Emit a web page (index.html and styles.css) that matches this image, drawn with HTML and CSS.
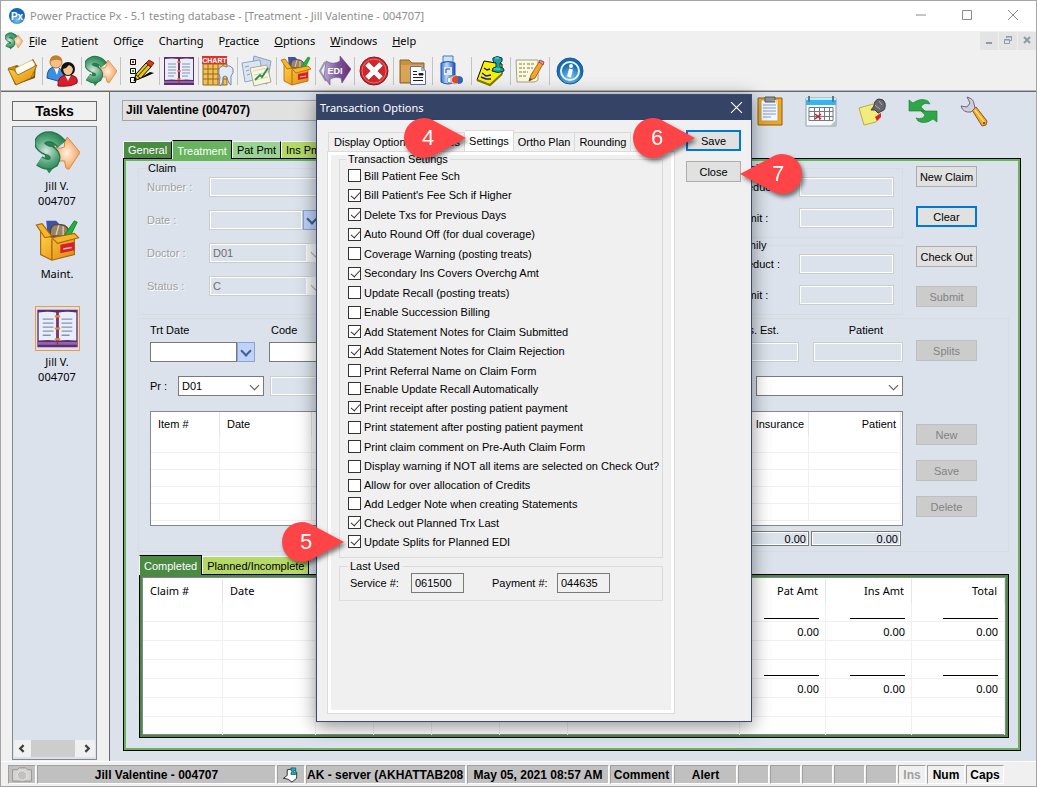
FILE: index.html
```
<!DOCTYPE html>
<html lang="en">
<head>
    <meta charset="UTF-8">
    <meta name="viewport" content="width=device-width, initial-scale=1.0">
    <title>Power Practice Px</title>
    <link rel="stylesheet" href="styles.css">
</head>
<body>

<!-- shared icons -->
<svg class="sprite" aria-hidden="true">
    <defs>
        <radialGradient id="g-green" gradientUnits="userSpaceOnUse" cx="8" cy="15" r="14"><stop offset="0" stop-color="#d4e8dd"/><stop offset=".6" stop-color="#5aa880"/><stop offset="1" stop-color="#2b8550"/></radialGradient>
        <radialGradient id="g-orange"><stop offset="0" stop-color="#fff0e0"/><stop offset="1" stop-color="#f2a35c"/></radialGradient>
        <linearGradient id="g-gold" x2="1" y2="1"><stop offset="0" stop-color="#ffd34a"/><stop offset="1" stop-color="#e08a10"/></linearGradient>
        <linearGradient id="g-purple"><stop offset="0" stop-color="#b9a8d0"/><stop offset=".5" stop-color="#7b5aa0"/><stop offset="1" stop-color="#6a2a6e"/></linearGradient>
        <linearGradient id="g-blue" x2="1"><stop offset="0" stop-color="#3a78d8"/><stop offset=".4" stop-color="#b9d6ff"/><stop offset="1" stop-color="#2050b8"/></linearGradient>
        <radialGradient id="g-info" cx=".5" cy=".75"><stop offset="0" stop-color="#7cc8f2"/><stop offset="1" stop-color="#1468b4"/></radialGradient>
    </defs>
    <symbol id="i-money" viewBox="0 0 32 32">
        <path d="M13 12l5 1 3-1V8l2-3 9 11-8 12-2-1-1-5h-8z" fill="url(#g-orange)" stroke="#d9853c" stroke-width=".7"/>
        <path d="M7 2l5-1 2 4v21l-4 5-3-5z" fill="#2b8550"/>
        <path d="M19 10Q14 4 8 5Q2 7 4 11Q6 14 11 15Q16 18 13 23Q9 26 3 22" fill="none" stroke="#27774a" stroke-width="8"/>
        <path d="M19 10Q14 4 8 5Q2 7 4 11Q6 14 11 15Q16 18 13 23Q9 26 3 22" fill="none" stroke="url(#g-green)" stroke-width="6"/>
    </symbol>
    <symbol id="i-box" viewBox="0 0 32 32">
        <path d="M8 2h7l3 3v8H9z" fill="#3c55a8"/>
        <path d="M11 13c-1-8 3-9 6-8 5-1 8 3 7 8z" fill="#9a8468" stroke="#594838"/>
        <path d="M15 12l2-7M20 12V6" stroke="#dccdb0"/>
        <path d="M21 12l7-10 2 1-5 10z" fill="#1eb43c" stroke="#0c7a22" stroke-width=".6"/>
        <path d="M4 9l8 5 16-2v14l-16 4-8-4z" fill="url(#g-gold)" stroke="#a86408" stroke-width=".8"/>
        <path d="M1 5l4-1 7 9-5 1zM12 14l16-3 3 3-15 4z" fill="#f7b62a" stroke="#a86408" stroke-width=".8"/>
        <path d="M12 15v15" stroke="#b06c0a"/>
        <path d="M18 19l10-2v6l-10 2z" fill="#d8202c"/><path d="M20 22l6-1" stroke="#ffc0b0"/>
    </symbol>
    <symbol id="i-book" viewBox="0 0 32 32">
        <path d="M1 2h30v28H1z" fill="#5a3170"/><path d="M1 26h30v2H1z" fill="#9c5fa8"/>
        <path d="M2 4q7-1 13 0v21q-6-1-13 0zM30 4q-7-1-13 0v21q6-1 13 0z" fill="#e9eefa"/>
        <path d="M5 9h8M5 12h8M5 15h8M5 18h8M5 21h6M19 9h8M19 12h8M19 15h8M19 18h8M19 21h6" stroke="#8693ad"/>
        <path d="M16 4v24" stroke="#8a2f6a"/><path d="M14 7h4M14 16h4M14 24h4" stroke="#f08c28" stroke-width="1.6"/>
    </symbol>
</svg>

<div class="window">
    <header class="title-bar">
        <svg class="logo" viewBox="0 0 16 16"><circle cx="8" cy="8" r="8" fill="url(#g-info)"/><text x="8" y="12" text-anchor="middle">Px</text></svg>
        <span class="title">Power Practice Px - 5.1 testing database - [Treatment - Jill Valentine - 004707]</span>
        <div class="window-controls">
            <button aria-label="Minimize"><svg viewBox="0 0 12 12"><path d="M1 6h10"/></svg></button>
            <button aria-label="Maximize"><svg viewBox="0 0 12 12"><path d="M1.500 1.500h9v9h-9z"/></svg></button>
            <button aria-label="Close window"><svg viewBox="0 0 12 12"><path d="M1 1l10 10M11 1L1 11"/></svg></button>
        </div>
    </header>

    <nav class="menu-bar">
        <svg class="menu-icon"><use href="#i-money"/></svg>
        <button><u>F</u>ile</button>
        <button><u>P</u>atient</button>
        <button>Offi<u>c</u>e</button>
        <button>Charting</button>
        <button>P<u>r</u>actice</button>
        <button><u>O</u>ptions</button>
        <button><u>W</u>indows</button>
        <button><u>H</u>elp</button>
        <div class="mdi-controls">
            <button aria-label="Minimize form"><svg viewBox="0 0 10 10"><path d="M2 8h6"/></svg></button>
            <button aria-label="Restore form"><svg viewBox="0 0 10 10"><path class="thin" d="M3.500 3V1.500h5v4H7M1.500 4.500h5v4h-5z"/><path class="thin" d="M3 2h6M1 5h6"/></svg></button>
            <button aria-label="Close form"><svg viewBox="0 0 10 10"><path d="M2 2l6 6M8 2L2 8"/></svg></button>
        </div>
    </nav>

    <div class="toolbar">
        <button aria-label="Open"><svg viewBox="0 0 32 32"><path d="M1 13l9-3 4 2 12-8 3 5-1 14-20 7z" fill="#8a5a08"/><path d="M7 14L25 5l3 4-2 12-15 6z" fill="#fffdf2" stroke="#c9b47a" stroke-width=".7"/><path d="M1 13l7-2 3 16-3 2z" fill="#c98a14"/><path d="M1 14l6 1 4 5 19-10-6 13-15 7z" fill="url(#g-gold)" stroke="#8a5a08" stroke-width=".8"/></svg></button>
        <button aria-label="Patients"><svg viewBox="0 0 32 32"><path d="M1 23q0-11 8-11t9 11l-6 3z" fill="#3b8ee0" stroke="#17559c"/><path d="M8 13l3 7 2-7z" fill="#fff"/><circle cx="10" cy="7" r="6" fill="#f3c08a" stroke="#b87830"/><path d="M4 7q0-7 6-6.500T16 6q-6-2-7-1-3 0-5 2z" fill="#c47f28"/><path d="M12 31q-1-11 10-11t9 8q-6 4-19 3z" fill="#d8202c" stroke="#8c0f18"/><path d="M19 20l3 6 3-6z" fill="#fff"/><circle cx="22" cy="14" r="7" fill="#111"/><path d="M17 14q4-1 6-4 3 1 4 4-1 6-5 6t-5-6z" fill="#f6c490"/></svg></button>
        <button aria-label="Treatment"><svg><use href="#i-money"/></svg></button>
        <button aria-label="Checklist"><svg viewBox="0 0 32 32"><path d="M6.500 4.500h5v5h-5zM6.500 13.500h5v5h-5zM6.500 22.500h5v5h-5z" fill="#fff" stroke="#000"/><path d="M8 6h2v2H8z" fill="red"/><path d="M8 15h2v2H8z" fill="#0b0"/><path d="M13 25l13-8 4 1-9 4z" fill="#000"/><path d="M10 26l2-7L22 8l5 4-10 11z" fill="#e5c51c" stroke="#000"/><path d="M12 20l4 3M14 21l10-11" stroke="#000" stroke-width=".8"/><path d="M22 8l3-3 5 3-3 4z" fill="#c8402c" stroke="#7a1c10"/><path d="M10 26l1-4 2 2z" fill="#000"/></svg></button>
        <button aria-label="Appointment book"><svg><use href="#i-book"/></svg></button>
        <button aria-label="Chart"><svg viewBox="0 0 32 32"><path d="M1 9h24v21H1z" fill="#f7c04c" stroke="#8a6a30"/><path d="M6 9v21M11 9v21M16 9v21M21 9v21M1 14h24M1 19h24M1 24h24" stroke="#8a6a30"/><path d="M0 1h25v8H0z" fill="#e03028"/><text x="12.500" y="8" text-anchor="middle" class="chart-word">CHART</text><path d="M17 14q3-5 7-2 4-3 7 2 1 4-2 7v9q-2 0-4-8-2-2-4 0 0 7-3 9-1-4 0-9-2-4-1-8z" fill="#e3e9f6" stroke="#7886a5"/></svg></button>
        <button aria-label="Reports"><svg viewBox="0 0 32 32"><path d="M13 1l17 5-4 23-17-4z" fill="#c5d4e8" stroke="#8ba0bd"/><path d="M1 8l18-3 3 18-18 4z" fill="#dce6f3" stroke="#92a5bf"/><path d="M9 13l17-3 4 17-17 4z" fill="#f8f6e2" stroke="#a9a98f"/><path d="M12 16l14-3M13 20l14-3M14 25l13-3" stroke="#d4d7bb"/><path d="M14 25l5-5 2 2 6-9" fill="none" stroke="#348c46" stroke-width="1.800"/><path d="M4 12l4-1M5 16l3-1M6 20l3-1" stroke="#8ba0bd"/></svg></button>
        <button aria-label="Maintenance"><svg><use href="#i-box"/></svg></button>
        <button aria-label="EDI"><svg viewBox="0 0 32 32"><path d="M6 7L1 16l6 10" fill="none" stroke="#9a9ab0" stroke-width="2"/><path d="M9 7q6 3 12-1V1l11 13-9 14-1-5q-6-2-11 1v6L5 22l1-8 1-8z" fill="url(#g-purple)" stroke="#6a4a80" stroke-width=".6"/><text x="16" y="19" text-anchor="middle" class="edi-word">EDI</text></svg></button>
        <button aria-label="Cancel"><svg viewBox="0 0 32 32"><circle cx="16" cy="16" r="14" fill="#d3262c" stroke="#7d1c20"/><circle cx="16" cy="16" r="12" fill="none" stroke="#ed6b69"/><path d="M9 9l14 14M23 9L9 23" stroke="#8c2b2b" stroke-width="6"/><path d="M9 9l14 14M23 9L9 23" stroke="#fff" stroke-width="5"/></svg></button>
        <button aria-label="Documents"><svg viewBox="0 0 32 32"><path d="M3 5h9l3 3h12v20H3z" fill="#c99242" stroke="#8c6224"/><path d="M4 10h22v17H4z" fill="#d9a657"/><path d="M13.500 11.500h11l4 4v14h-15z" fill="#fff" stroke="#5a6fae"/><path d="M24 11v5h5z" fill="#9bafdc"/><path d="M16 16.500h4M16 19.500h4M16 22.500h10M16 25.500h10M22 18.500h4v1.500h-4z" stroke="#222"/></svg></button>
        <button aria-label="Prescriptions"><svg viewBox="0 0 32 32"><path d="M7 1h10v6H7z" fill="#cfe4fb" stroke="#3d78c9"/><path d="M5 8q7-3 14 0v19q-7 4-14 0z" fill="url(#g-blue)" stroke="#1f55b0"/><path d="M8 12h8v8H8z" fill="#dceaff"/><path d="M10 18v-4h4" fill="none" stroke="#3c4a78"/><ellipse cx="15" cy="25" rx="4" ry="3" fill="#fff" stroke="#999"/><path d="M15 22q5-3 7 0v6q-5 2-7-1z" fill="#e8e8f0" stroke="#aaa"/><path d="M16 25q0-4 4-4h2l1 7h-4q-3 0-3-3z" fill="#e24a20"/><path d="M22 21q5 0 5 4t-5 4z" fill="#2a66c8"/></svg></button>
        <button aria-label="Notes"><svg viewBox="0 0 32 32"><path d="M9 6l18 3v10L15 30 2 25z" fill="#f8f000" stroke="#000"/><path d="M2 25l13 5 12-11" fill="none" stroke="#807800" stroke-width="2"/><path d="M9 13l3 2 3-1M7 18l4 3 5-1M6 22l5 2 5 0" stroke="#1818c0" stroke-width="1.500" fill="none"/><path d="M17 16q0-4 4-4V8q-4-1-3-5 4-3 9 0 1 4-2 5v4q5 1 4 4-6 3-12 0z" fill="#1aa0a0" stroke="#023c3c"/><path d="M20 3h4M19 14h6" stroke="#7ce0e0"/></svg></button>
        <button aria-label="Edit notes"><svg viewBox="0 0 32 32"><path d="M2 5h22v20q-2 2-4 2H3z" fill="#fbf8dc" stroke="#a0a08c"/><path d="M5 9h6M13 9h8M5 13h6M13 13h6M5 17h9M5 21h8" stroke="#777b60" stroke-dasharray="3 1"/><path d="M15 26l2-6L25 7l4 2-8 14z" fill="#f6a42c" stroke="#a8681a"/><path d="M25 7l1-2 4 2-1 3z" fill="#f08a90" stroke="#985058"/><path d="M15 26l1-3 2 1z" fill="#444"/></svg></button>
        <button aria-label="Information"><svg viewBox="0 0 32 32"><circle cx="16" cy="16" r="13" fill="url(#g-info)" stroke="#175b96"/><circle cx="16" cy="16" r="9" fill="none" stroke="#e8f6ff" stroke-width="2"/><circle cx="17" cy="11" r="2" fill="#fff"/><path d="M17 14l-2 8" stroke="#fff" stroke-width="4"/></svg></button>
    </div>

    <div class="main">
        <aside class="sidebar">
            <button class="tasks-button">Tasks</button>
            <div class="task-list">
                <div class="tasks">
                    <a href="#treatment"><svg><use href="#i-money"/></svg>Jill V.<br>004707</a>
                    <a href="#maint"><svg><use href="#i-box"/></svg>Maint.</a>
                    <a href="#book"><svg class="current"><use href="#i-book"/></svg>Jill V.<br>004707</a>
                </div>
                <div class="scrollbar">
                    <button aria-label="Scroll left"><svg viewBox="0 0 8 8"><path d="M5 1L2 4l3 3"/></svg></button>
                    <span class="thumb"></span>
                    <button aria-label="Scroll right"><svg viewBox="0 0 8 8"><path d="M3 1l3 3-3 3"/></svg></button>
                </div>
            </div>
        </aside>

        <main class="workspace">
            <div class="patient-row">
                <h1>Jill Valentine (004707)</h1>
                <div class="quick-icons">
                    <button aria-label="Clipboard"><svg viewBox="0 0 32 32"><path d="M4 3h24v27H4z" fill="#f0a81c" stroke="#945c10"/><path d="M7 5h17v21H7z" fill="#f4f8ff" stroke="#b0a070"/><path d="M9 10h13M9 13h13M9 16h13M9 19h13M9 22h8" stroke="#7f9cd0"/><path d="M11 2h10v5H11z" fill="#8c919a" stroke="#555"/><path d="M24 5v6l-4-6z" fill="#ffd470"/></svg></button>
                    <button aria-label="Calendar"><svg viewBox="0 0 32 32"><path d="M1 3h30v28H1z" fill="#f7f9fa" stroke="#8ca2ac"/><path d="M1 3h30v7H1z" fill="#35b5ee"/><path d="M1 3h30v2H1z" fill="#bdeeff"/><path d="M4 12.500h24v13H4zM4 16.500h24M4 21.500h24M9.500 12v14M14.500 12v14M19.500 12v14M24.500 12v14" fill="none" stroke="#707a80"/><path d="M10 19l6 5M16 19l-6 5" stroke="#d0201c" stroke-width="1.500"/><path d="M25 31l6-6v6z" fill="#b7c5cc"/><path d="M4 1v6M28 1v6" stroke="#5f7784" stroke-width="2"/></svg></button>
                    <button aria-label="Pinned note"><svg viewBox="0 0 32 32"><path d="M3 13l14-4 7 12-4 6-12 3z" fill="#f2ec7c" stroke="#b9ae48"/><path d="M19 22l6-4 0 4-4 4z" fill="#d82424"/><path d="M15 15l3-4q0-6 5-7 5 0 6 4 1 7-3 8l-4 2-3-3z" fill="#66666c" stroke="#3a3a40"/><path d="M19 10l5 4M23 6l3 4" stroke="#aaaab2"/></svg></button>
                    <button aria-label="Refresh"><svg viewBox="0 0 32 32"><path d="M2 5l4 3q8-6 15-2l2 3q-7-2-9 3l4 4H2z" fill="#2fa648" stroke="#157a2c" stroke-width=".6"/><path d="M30 27l-4-3q-8 6-15 2l-2-3q7 2 9-3l-4-4h16z" fill="#2fa648" stroke="#157a2c" stroke-width=".6"/></svg></button>
                    <button aria-label="Tools"><svg viewBox="0 0 32 32"><path d="M14 15l4-3 11 14-1 4-4 1z" fill="#f0aa1c" stroke="#94504c"/><path d="M17 15l9 12" stroke="#ffe27a" stroke-width="1.500"/><path d="M3 11l6 1 3-4-3-6q7 2 7 7l1 4-4 4q-8 1-10-6z" fill="#ccd0d8" stroke="#776080"/><circle cx="26" cy="28" r="1" fill="#7a3a10"/></svg></button>
                </div>
            </div>

            <div class="tabs">
                <button class="tab general">General</button>
                <button class="tab treatment">Treatment</button>
                <button class="tab pat-pmt">Pat Pmt</button>
                <button class="tab ins-pmt">Ins Pmt</button>
            </div>

            <section class="tab-panel">
                <div class="claim-area">
                    <fieldset class="claim">
                        <legend>Claim</legend>
                        <label for="number">Number :</label>
                        <input id="number" type="text" disabled>
                        <label for="claim-date">Date :</label>
                        <span class="date-box"><input id="claim-date" type="text" disabled><button aria-label="Pick claim date" disabled></button></span>
                        <label for="doctor">Doctor :</label>
                        <span class="select-box"><select id="doctor" disabled><option>D01</option></select></span>
                        <label for="status">Status :</label>
                        <span class="select-box"><select id="status" disabled><option>C</option></select></span>
                    </fieldset>
                    <div class="benefits">
                        <fieldset>
                            <legend>Single</legend>
                            <label for="ind-deduct">Deduct :</label><input id="ind-deduct" type="text" disabled>
                            <label for="ind-limit">Limit :</label><input id="ind-limit" type="text" disabled>
                        </fieldset>
                        <fieldset>
                            <legend>Family</legend>
                            <label for="fam-deduct">Deduct :</label><input id="fam-deduct" type="text" disabled>
                            <label for="fam-limit">Limit :</label><input id="fam-limit" type="text" disabled>
                        </fieldset>
                    </div>
                    <div class="claim-buttons">
                        <button class="btn">New Claim</button>
                        <button class="btn focused">Clear</button>
                        <button class="btn">Check Out</button>
                        <button class="btn" disabled>Submit</button>
                    </div>
                </div>

                <div class="entry-area">
                    <div class="entry">
                        <div class="entry-row">
                            <div class="field trt-date"><label for="trt-date">Trt Date</label><span class="date-box"><input id="trt-date" type="text"><button aria-label="Pick treatment date"></button></span></div>
                            <div class="field code"><label for="code">Code</label><input id="code" type="text"></div>
                            <div class="field amount"><label for="ins-est">Ins. Est.</label><input id="ins-est" type="text" disabled></div>
                            <div class="field amount"><label for="patient">Patient</label><input id="patient" type="text" disabled></div>
                        </div>
                        <div class="provider-row">
                            <label for="provider">Pr :</label>
                            <span class="select-box provider"><select id="provider"><option>D01</option></select></span>
                            <input class="provider-name" type="text" aria-label="Provider name" disabled>
                            <span class="select-box plan"><select aria-label="Plan"><option></option></select></span>
                        </div>
                        <div class="list items-list">
                            <table>
                                <colgroup><col class="c-item"><col class="c-date"><col><col class="c-ins"><col class="c-pat"></colgroup>
                                <thead><tr><th>Item #</th><th>Date</th><th></th><th class="num">Insurance</th><th class="num">Patient</th></tr></thead>
                                <tbody>
                                    <tr><td></td><td></td><td></td><td></td><td></td></tr>
                                    <tr><td></td><td></td><td></td><td></td><td></td></tr>
                                    <tr><td></td><td></td><td></td><td></td><td></td></tr>
                                    <tr><td></td><td></td><td></td><td></td><td></td></tr>
                                    <tr><td></td><td></td><td></td><td></td><td></td></tr>
                                </tbody>
                            </table>
                        </div>
                        <div class="totals">
                            <input type="text" aria-label="Insurance total" value="0.00" readonly>
                            <input type="text" aria-label="Patient total" value="0.00" readonly>
                        </div>
                    </div>
                    <div class="entry-buttons">
                        <button class="btn splits" disabled>Splits</button>
                        <button class="btn" disabled>New</button>
                        <button class="btn" disabled>Save</button>
                        <button class="btn" disabled>Delete</button>
                    </div>
                </div>

                <div class="tabs lower-tabs">
                    <button class="tab completed">Completed</button>
                    <button class="tab planned">Planned/Incomplete</button>
                </div>
                <div class="list claims-list">
                    <table>
                        <colgroup><col class="l-claim"><col class="l-date"><col class="l-s"><col class="l-s"><col class="l-m"><col class="l-m"><col><col class="l-amt"><col class="l-amt"><col class="l-total"></colgroup>
                        <thead><tr><th>Claim #</th><th>Date</th><th></th><th></th><th></th><th></th><th></th><th class="num">Pat Amt</th><th class="num">Ins Amt</th><th class="num">Total</th></tr></thead>
                        <tbody>
                            <tr><td></td><td></td><td></td><td></td><td></td><td></td><td></td><td><hr></td><td><hr></td><td><hr></td></tr>
                            <tr><td></td><td></td><td></td><td></td><td></td><td></td><td></td><td>0.00</td><td>0.00</td><td>0.00</td></tr>
                            <tr><td></td><td></td><td></td><td></td><td></td><td></td><td></td><td></td><td></td><td></td></tr>
                            <tr><td></td><td></td><td></td><td></td><td></td><td></td><td></td><td><hr></td><td><hr></td><td><hr></td></tr>
                            <tr><td></td><td></td><td></td><td></td><td></td><td></td><td></td><td>0.00</td><td>0.00</td><td>0.00</td></tr>
                            <tr><td></td><td></td><td></td><td></td><td></td><td></td><td></td><td></td><td></td><td></td></tr>
                            <tr><td></td><td></td><td></td><td></td><td></td><td></td><td></td><td></td><td></td><td></td></tr>
                        </tbody>
                    </table>
                </div>
            </section>
        </main>
    </div>

    <footer class="status-bar">
        <span class="cell s-icon"><svg viewBox="0 0 24 18"><path d="M2 4h5l2-2h7l2 2h4v12H2z" fill="#d6d4d0" stroke="#98948e"/><circle cx="12" cy="10" r="5" fill="#c3c1bd" stroke="#e8e6e2"/></svg></span>
        <span class="cell s-patient">Jill Valentine - 004707</span>
        <span class="cell s-icon"><svg viewBox="0 0 24 18"><path d="M8 4l7-1 3 4v6l-5 4-4-3-5-1 4-3z" fill="#fff" stroke="#000" stroke-width=".8"/><path d="M12 2h5v3h-2v2h3v2h-6V7h1V5h-1z" fill="#18b8c0" stroke="#024c50" stroke-width=".7"/></svg></span>
        <span class="cell s-server">AK - server (AKHATTAB208</span>
        <span class="cell s-time">May 05, 2021 08:57 AM</span>
        <span class="cell s-word">Comment</span>
        <span class="cell s-word">Alert</span>
        <span class="cell s-blank"></span>
        <span class="cell s-blank"></span>
        <span class="cell s-blank"></span>
        <span class="cell s-blank"></span>
        <span class="cell s-blank"></span>
        <span class="cell key off">Ins</span>
        <span class="cell key">Num</span>
        <span class="cell key">Caps</span>
    </footer>

    <div class="dialog" role="dialog" aria-labelledby="dialog-title">
        <div class="dialog-title">
            <h2 id="dialog-title">Transaction Options</h2>
            <button aria-label="Close dialog"><svg viewBox="0 0 12 12"><path d="M1 1l10 10M11 1L1 11"/></svg></button>
        </div>
        <div class="dialog-body">
            <div class="options">
                <div class="option-tabs">
                    <button class="display">Display Options</button>
                    <button class="fees">Fees</button>
                    <button class="selected">Settings</button>
                    <button>Ortho Plan</button>
                    <button>Rounding</button>
                </div>
                <div class="option-panel">
                    <fieldset class="settings">
                        <legend>Transaction Settings</legend>
                        <div class="checks posting">
                            <label><input type="checkbox">Bill Patient Fee Sch</label>
                            <label><input type="checkbox" checked>Bill Patient's Fee Sch if Higher</label>
                            <label><input type="checkbox" checked>Delete Txs for Previous Days</label>
                            <label><input type="checkbox" checked>Auto Round Off (for dual coverage)</label>
                            <label><input type="checkbox">Coverage Warning (posting treats)</label>
                            <label><input type="checkbox" checked>Secondary Ins Covers Overchg Amt</label>
                            <label><input type="checkbox">Update Recall (posting treats)</label>
                            <label><input type="checkbox">Enable Succession Billing</label>
                            <label><input type="checkbox" checked>Add Statement Notes for Claim Submitted</label>
                            <label><input type="checkbox" checked>Add Statement Notes for Claim Rejection</label>
                            <label><input type="checkbox">Print Referral Name on Claim Form</label>
                        </div>
                        <div class="checks printing">
                            <label><input type="checkbox">Enable Update Recall Automatically</label>
                            <label><input type="checkbox" checked>Print receipt after posting patient payment</label>
                            <label><input type="checkbox">Print statement after posting patient payment</label>
                            <label><input type="checkbox">Print claim comment on Pre-Auth Claim Form</label>
                            <label><input type="checkbox">Display warning if NOT all items are selected on Check Out?</label>
                            <label><input type="checkbox">Allow for over allocation of Credits</label>
                        </div>
                        <div class="checks planned-checks">
                            <label><input type="checkbox">Add Ledger Note when creating Statements</label>
                            <label><input type="checkbox" checked>Check out Planned Trx Last</label>
                            <label><input type="checkbox" checked>Update Splits for Planned EDI</label>
                        </div>
                    </fieldset>
                    <fieldset class="last-used">
                        <legend>Last Used</legend>
                        <label for="service">Service #:</label><input id="service" type="text" value="061500">
                        <label for="payment">Payment #:</label><input id="payment" type="text" value="044635">
                    </fieldset>
                </div>
            </div>
            <div class="dialog-buttons">
                <button class="btn focused">Save</button>
                <button class="btn">Close</button>
            </div>
        </div>
    </div>

    <!-- step markers -->
    <div class="marker step-4"><svg viewBox="0 0 62 40"><path d="M62 20L32 4Q26 0 20 0A20 20 0 0 0 20 40Q26 40 32 36Z"/></svg><span>4</span></div>
    <div class="marker step-5"><svg viewBox="0 0 62 40"><path d="M62 20L32 4Q26 0 20 0A20 20 0 0 0 20 40Q26 40 32 36Z"/></svg><span>5</span></div>
    <div class="marker step-6"><svg viewBox="0 0 62 40"><path d="M62 20L32 4Q26 0 20 0A20 20 0 0 0 20 40Q26 40 32 36Z"/></svg><span>6</span></div>
    <div class="marker step-7 left"><svg viewBox="0 0 62 40"><path d="M0 20L30 4Q36 0 42 0A20 20 0 0 1 42 40Q36 40 30 36Z"/></svg><span>7</span></div>
</div>

</body>
</html>
```
FILE: styles.css
```
* {
    box-sizing: border-box;
}
body {
    margin: 0;
    font-family: "Liberation Sans", Arial, sans-serif;
    font-size: 11px;
    line-height: 14px;
    color: #000;
    background: #fff;
}
button, input, select {
    font: inherit;
    color: inherit;
    margin: 0;
    padding: 0;
    border-radius: 0;
}
button {
    border: none;
    background: none;
    white-space: nowrap;
}
h1, h2 {
    margin: 0;
    font-size: 12px;
}
.sprite {
    position: absolute;
    width: 0;
    height: 0;
}
.window {
    position: relative;
    display: flex;
    flex-direction: column;
    min-height: 100vh;
    border: 1px solid #a5a5a5;
    background: #f0f0f0;
    overflow: hidden;
}

/* title bar and menu */
.title-bar {
    display: flex;
    align-items: center;
    height: 30px;
    padding-left: 8px;
    background: #fff;
}
.title-bar .title, .menu-bar, .dialog h2, .tasks, .claims-list {
    font-family: "Noto Sans", "Open Sans", sans-serif;
    font-size: 11px;
}
.title {
    margin-left: 5px;
    flex: 1;
    color: #8e8e8e;
}
.logo {
    width: 16px;
    height: 16px;
}
.logo text {
    font-size: 10px;
    font-weight: bold;
    fill: #fff;
}
.window-controls {
    display: flex;
}
.window-controls button {
    width: 46px;
    height: 28px;
}
.window-controls svg {
    width: 12px;
    height: 12px;
    fill: none;
    stroke: #8a8a8a;
}
.menu-bar {
    display: flex;
    align-items: center;
    gap: 15px;
    height: 20px;
    padding-left: 4px;
}
.menu-icon {
    width: 18px;
    height: 18px;
    margin-right: -9px;
}
.mdi-controls {
    display: flex;
    gap: 1px;
    margin-left: auto;
}
.mdi-controls button {
    width: 18px;
    height: 18px;
    background: #e4e4e4;
}
.mdi-controls svg {
    width: 10px;
    height: 10px;
    fill: none;
    stroke: #8d9bab;
    stroke-width: 2;
}
.mdi-controls .thin {
    stroke-width: 1;
}

/* toolbar */
.toolbar {
    display: flex;
    align-items: center;
    height: 41px;
    padding-left: 3px;
    border-bottom: 1px solid #696969;
    box-shadow: inset 0 -1px #b4b4b4;
}
.toolbar button {
    width: 39px;
    height: 28px;
    border-right: 1px solid #c3c3c3;
    display: flex;
    align-items: center;
    justify-content: center;
}
.toolbar button:last-child {
    border-right: none;
}
.toolbar svg {
    flex: none;
    width: 32px;
    height: 32px;
}
.chart-word {
    font-size: 7px;
    font-weight: bold;
    fill: #fff;
}
.edi-word {
    font-size: 9px;
    font-weight: bold;
    fill: #fff;
}

/* sidebar */
.main {
    display: flex;
    flex: 1;
}
.sidebar {
    display: flex;
    flex-direction: column;
    gap: 5px;
    width: 109px;
    padding: 9px 12px 1px 11px;
    border-right: 1px solid #696969;
}
.tasks-button {
    height: 20px;
    border: 1px solid #696969;
    font-size: 14px;
    font-weight: bold;
}
.task-list {
    flex: 1;
    display: flex;
    flex-direction: column;
    justify-content: space-between;
    padding: 3px 1px 2px;
    border: 1px solid #828790;
    background: #dbe2eb;
}
.tasks {
    display: grid;
    grid-auto-rows: 88px;
    text-align: center;
    line-height: 15px;
}
.tasks a {
    color: #000;
    text-decoration: none;
    padding-left: 5px;
}
.tasks svg {
    display: block;
    width: 45px;
    height: 45px;
    margin: 0 auto 3px;
}
.tasks .current {
    border: 1px solid #f09a3c;
}
.scrollbar {
    display: flex;
    height: 17px;
    background: #f0f0f0;
}
.scrollbar button {
    width: 17px;
}
.scrollbar svg {
    display: block;
    margin: auto;
    width: 9px;
    height: 9px;
    fill: none;
    stroke: #404040;
    stroke-width: 2;
}
.thumb {
    width: 44px;
    margin-right: auto;
    background: #cdcdcd;
}

/* workspace */
.workspace {
    flex: 1;
    display: flex;
    flex-direction: column;
    min-width: 0;
    padding: 0 15px 10px 12px;
    background: #dbe2eb;
}
.patient-row {
    display: flex;
    align-items: center;
    height: 37px;
}
.patient-row h1 {
    width: 240px;
    height: 21px;
    padding-left: 3px;
    line-height: 19px;
    background: #e1e1e1;
    border: 1px solid #a5a5a5;
}
.quick-icons {
    display: flex;
    margin: 0 22px 0 auto;
}
.quick-icons button {
    width: 51px;
    height: 32px;
}
.quick-icons svg {
    width: 32px;
    height: 32px;
}
.tabs {
    display: flex;
    align-items: flex-end;
}
.tab {
    height: 17px;
    padding: 0 4px;
    border-top: 1px solid #f4f4f4;
    border-left: 1px solid #f4f4f4;
    border-right: 1px solid #000;
    position: relative;
    z-index: 1;
}
.workspace > .tabs {
    height: 29px;
    padding-left: 1px;
}
.general, .treatment, .completed {
    color: #fff;
}
.general {
    background: #4b8a43;
}
.treatment {
    height: 19px;
    margin-bottom: -1px;
    padding-top: 2px;
    border-top-color: #000;
    background: #68b35e;
}
.pat-pmt {
    background: #9ad494;
}
.ins-pmt {
    background: #b4d968;
}
.tab-panel {
    flex: 1;
    margin-left: 1px;
    padding: 2px 11px 12px 14px;
    border: 1px solid #000;
    box-shadow: inset 0 0 0 2px #68b35e;
}

/* claim form */
fieldset {
    min-width: 0;
    margin: 0;
    padding: 2px 8px 0;
    border: 1px solid #d9dcdf;
}
legend {
    padding: 0 1px;
}
input[type="text"], select {
    height: 20px;
    width: 100%;
    min-width: 0;
    padding: 0 3px;
    border: 1px solid #7a7a7a;
    background: #fff;
    appearance: none;
}
input[type="text"]:disabled, select:disabled {
    color: #6d6d6d;
    opacity: 1;
    border-color: #ccc;
    background: #dbe2eb;
    box-shadow: inset 0 0 0 1px #fff;
}
.date-box {
    display: flex;
}
.date-box button {
    flex: none;
    width: 18px;
    height: 20px;
    border: 1px solid #86a5d0;
    background: #bfd2fa;
}
.date-box button::before, .select-box::after {
    content: "";
    display: block;
    width: 6px;
    height: 6px;
    margin: -3px auto 0;
    border: solid #41608f;
    border-width: 0 2px 2px 0;
    transform: rotate(45deg);
}
.select-box {
    position: relative;
    display: block;
}
.select-box::after {
    position: absolute;
    right: 6px;
    top: 9px;
    border-color: #555;
    border-width: 0 1px 1px 0;
    pointer-events: none;
}
.claim .select-box::after {
    right: 2px;
    border-color: #aaa;
}
.claim select:disabled {
    border-right: 14px solid #f4f6f9;
}
.claim-area {
    display: grid;
    grid-template-columns: 1fr 303px 74px;
    margin-right: 32px;
}
.claim {
    display: grid;
    grid-template-columns: 52px 112px;
    grid-auto-rows: 20px;
    gap: 13px 10px;
    align-items: center;
}
.claim label {
    color: #a0a0a0;
    text-shadow: 1px 1px #fff;
}
.benefits fieldset {
    display: grid;
    grid-template-columns: 1fr 95px;
    gap: 11px;
    height: 77px;
    padding-left: 138px;
    align-content: start;
    align-items: center;
    white-space: nowrap;
}
.benefits legend {
    margin-left: -6px;
}
.btn {
    width: 61px;
    height: 21px;
    padding: 0;
    border: 1px solid #adadad;
    background: #e1e1e1;
}
.btn:disabled {
    color: #838383;
    border-color: #bfbfbf;
    background: #ccc;
}
.btn.focused {
    border: 2px solid #0078d7;
}
.claim-buttons {
    display: flex;
    flex-direction: column;
    gap: 19px;
    padding-top: 5px;
    margin-left: 13px;
}

/* treatment entry */
.entry-area {
    display: flex;
    gap: 13px;
    margin-top: 3px;
    padding: 4px 31px 5px 11px;
    border: 1px solid #d9dcdf;
}
.entry {
    flex: 1;
    min-width: 0;
}
.entry-row {
    display: flex;
    gap: 14px;
}
.field {
    display: flex;
    flex-direction: column;
    gap: 5px;
}
.trt-date {
    width: 105px;
}
.code {
    width: 90px;
    margin-right: auto;
}
.code label {
    padding-left: 2px;
}
.amount {
    width: 90px;
}
.amount label {
    padding-right: 20px;
    text-align: right;
}
.provider-row {
    display: flex;
    align-items: center;
    margin: 14px 0 15px;
}
.provider-row label {
    width: 28px;
}
.provider {
    width: 86px;
}
input.provider-name {
    width: 120px;
    margin-left: 6px;
}
.plan {
    width: 147px;
    margin-left: auto;
}
.list {
    background: #fff;
    border: 1px solid #828790;
}
table {
    width: 100%;
    table-layout: fixed;
    border-collapse: separate;
    border-spacing: 0;
}
th {
    height: 24px;
    padding: 0 4px 0 7px;
    font-weight: normal;
    text-align: left;
    border-right: 1px solid #e5e5e5;
}
td {
    height: 17px;
    padding: 0 6px;
    text-align: right;
    border-right: 1px solid #f0f0f0;
    border-bottom: 1px solid #f0f0f0;
}
.num {
    text-align: right;
}
.items-list {
    height: 115px;
    padding-right: 1px;
}
.c-item {
    width: 69px;
}
.c-date {
    width: 92px;
}
.c-ins {
    width: 90px;
}
.c-pat {
    width: 92px;
}
.totals {
    display: flex;
    justify-content: flex-end;
    gap: 2px;
    margin: 5px 2px 0 0;
}
.totals input[type="text"] {
    width: 90px;
    height: 15px;
    padding: 0 2px;
    text-align: right;
    background: #dbe2eb;
    box-shadow: inset 0 0 0 1px #fff;
}
.entry-buttons {
    display: flex;
    flex-direction: column;
    gap: 15px;
    padding-top: 17px;
}
.splits {
    margin-bottom: 48px;
}

/* completed claims */
.lower-tabs {
    height: 22px;
    margin-left: 1px;
}
.lower-tabs .tab {
    height: 18px;
}
.lower-tabs .completed {
    height: 20px;
    margin-bottom: -1px;
    border-top-color: #000;
    background: #4b8a43;
}
.planned {
    background: #b4d968;
}
.claims-list {
    height: 164px;
    border: 1px solid #000;
    box-shadow: inset 0 0 0 2px #4b8a43, inset 0 0 0 3px #828790;
    padding: 4px 3px 3px;
    margin-left: 1px;
}
.claims-list th {
    height: 24px;
    padding-right: 7px;
}
.claims-list td {
    height: 19px;
    line-height: 17px;
}
.claims-list tr:last-child td {
    height: 18px;
    border-bottom: none;
}
.claims-list hr {
    width: 55px;
    margin: 12px 0 0 auto;
    border: none;
    border-top: 1px solid #000;
}
.l-claim {
    width: 80px;
}
.l-date {
    width: 93px;
}
.l-s {
    width: 58px;
}
.l-m {
    width: 68px;
}
.l-amt {
    width: 86px;
}
.l-total {
    width: 93px;
}

/* status bar */
.status-bar {
    display: flex;
    gap: 1px;
    height: 25px;
    padding: 3px 32px 2px 7px;
    border-top: 1px solid #fff;
    font-size: 12px;
    font-weight: bold;
}
.cell {
    border: 1px solid #fff;
    border-top-color: #a0a0a0;
    border-left-color: #a0a0a0;
    background: #c0c0c0;
    line-height: 18px;
    text-align: center;
    white-space: nowrap;
    overflow: hidden;
}
.s-icon {
    width: 28px;
}
.s-icon svg {
    display: block;
    width: 24px;
    height: 17px;
    margin: 0 auto;
}
.s-patient {
    flex: 1;
}
.s-server {
    width: 160px;
    text-align: left;
}
.s-time {
    width: 142px;
}
.s-word {
    width: 63px;
}
.s-blank {
    width: 31px;
}
.key {
    width: 38px;
    background: #f0f0f0;
}
.off {
    width: 28px;
    color: #a0a0a0;
}

/* options dialog */
.dialog {
    position: absolute;
    left: 315px;
    top: 93px;
    z-index: 5;
    display: flex;
    flex-direction: column;
    width: 436px;
    height: 628px;
    border: 1px solid #3c4a6e;
    background: #f0f0f0;
    box-shadow: 0 4px 18px rgba(0, 0, 0, 0.45);
}
.dialog-title {
    display: flex;
    align-items: center;
    justify-content: space-between;
    height: 25px;
    padding: 0 8px 0 3px;
    color: #fff;
    background: #354466;
}
.dialog h2 {
    font-weight: normal;
}
.dialog-title svg {
    display: block;
    width: 13px;
    height: 13px;
    fill: none;
    stroke: #fff;
}
.dialog-body {
    flex: 1;
    display: flex;
    justify-content: space-between;
    padding: 10px 10px 7px;
}
.options {
    display: flex;
    flex-direction: column;
    width: 348px;
}
.option-tabs {
    display: flex;
    align-items: flex-end;
    height: 21px;
    padding-left: 1px;
}
.option-tabs button {
    height: 19px;
    padding: 0 4px;
    border: 1px solid #d9d9d9;
    border-left: none;
    border-bottom: none;
}
.option-tabs .display {
    padding-left: 5px;
    border-left: 1px solid #d9d9d9;
}
.option-tabs .fees {
    width: 49px;
    text-align: right;
}
.option-tabs .selected {
    height: 21px;
    background: #fff;
}
.option-panel {
    flex: 1;
    padding: 0 11px;
    border: 1px solid #dcdcdc;
    box-shadow: inset 0 0 0 3px #fff;
}
.option-panel fieldset {
    border-color: #dcdcdc;
}
.option-panel legend {
    padding: 0 2px;
    margin-left: -2px;
}
.settings {
    display: flex;
    flex-direction: column;
    height: 406px;
    padding: 3px 2px 0 8px;
}
.checks {
    display: flex;
    flex-direction: column;
    justify-content: space-between;
    margin-bottom: 5px;
}
.posting {
    height: 208px;
}
.printing {
    height: 110px;
}
.planned-checks {
    height: 51px;
}
.checks label {
    display: flex;
    align-items: center;
    gap: 3px;
    height: 13px;
    white-space: nowrap;
}
input[type="checkbox"] {
    flex: none;
    appearance: none;
    width: 13px;
    height: 13px;
    border: 1px solid #333;
    background: #fff;
}
input[type="checkbox"]:checked::after {
    content: "";
    display: block;
    width: 4px;
    height: 8px;
    margin: 0 0 0 4px;
    border: solid #333;
    border-width: 0 1px 1px 0;
    transform: rotate(42deg);
}
.last-used {
    display: flex;
    align-items: center;
    height: 42px;
    margin-top: 1px;
    padding: 0 10px 8px;
}
.last-used label {
    width: 61px;
}
.last-used input[type="text"] {
    width: 53px;
    margin-right: 28px;
    background: #f0f0f0;
}
.last-used label + input + label {
    width: 65px;
}
.dialog-buttons {
    display: flex;
    flex-direction: column;
    gap: 10px;
}
.dialog-buttons .btn {
    width: 55px;
}

/* numbered step markers */
.marker {
    position: absolute;
    z-index: 10;
    width: 62px;
    height: 40px;
    color: #fff;
    font-size: 22px;
    line-height: 22px;
    filter: drop-shadow(2px 3px 2px rgba(0, 0, 0, 0.5));
}
.marker svg {
    display: block;
    width: 62px;
    height: 40px;
    fill: #fe4446;
}
.marker span {
    position: absolute;
    left: 0;
    top: 9px;
    width: 48px;
    text-align: center;
}
.marker.left span {
    left: 14px;
}
.step-4 {
    left: 403px;
    top: 117px;
}
.step-5 {
    left: 281px;
    top: 521px;
}
.step-6 {
    left: 632px;
    top: 117px;
}
.step-7 {
    left: 739px;
    top: 153px;
}
```
